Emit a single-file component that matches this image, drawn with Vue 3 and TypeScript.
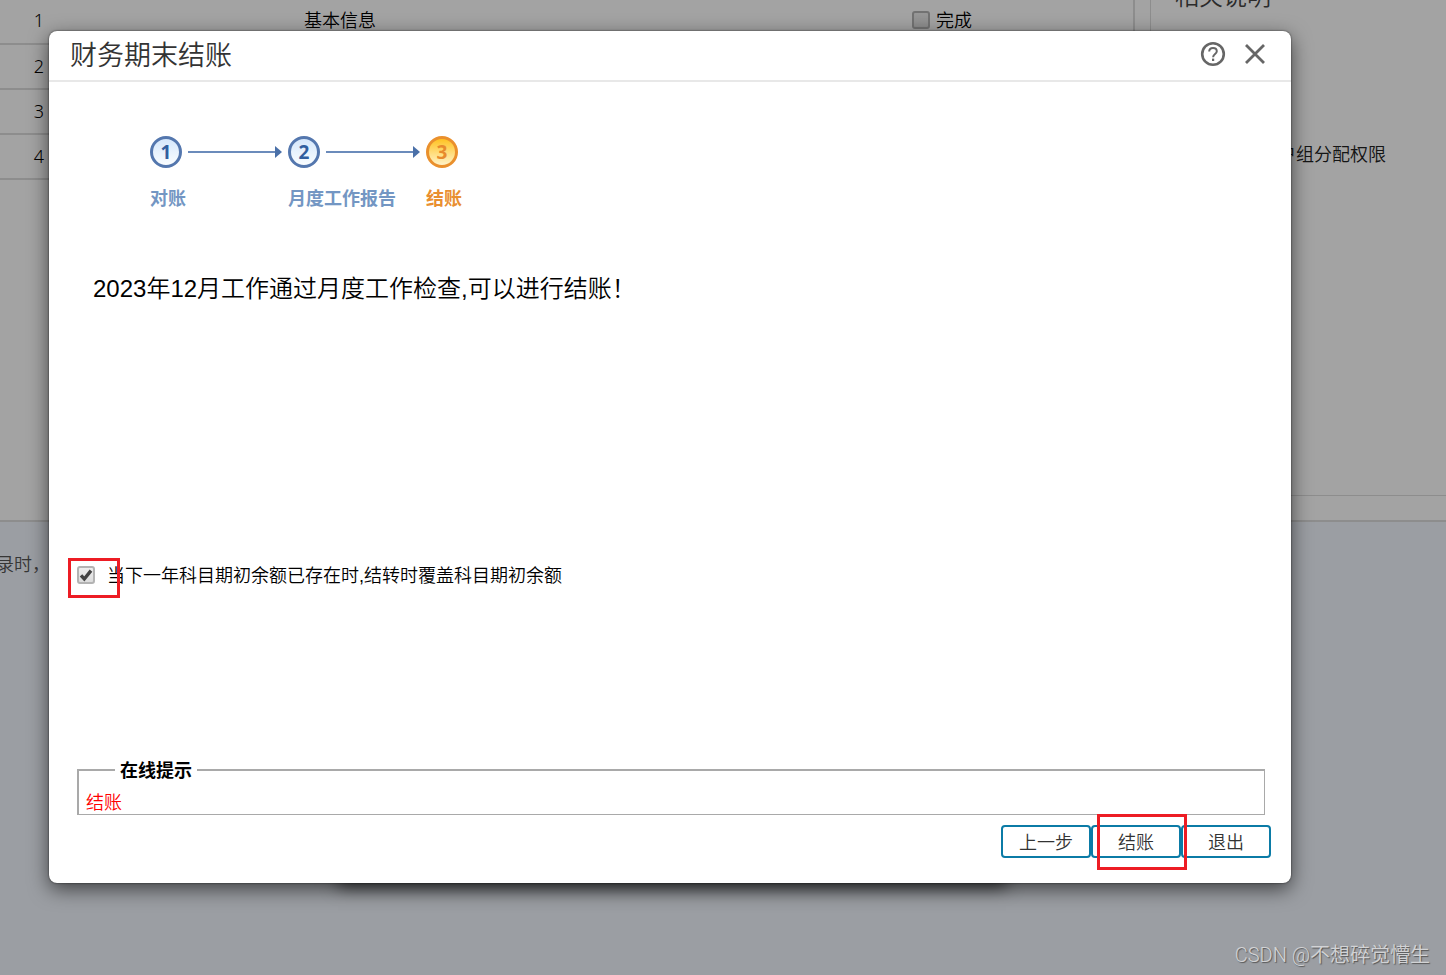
<script setup lang="ts">
import { ref } from 'vue'

interface Task {
  id: number
  name: string
  hasStatus: boolean
}

interface Step {
  id: number
  label: string
}

const tasks: Task[] = [
  { id: 1, name: '基本信息', hasStatus: true },
  { id: 2, name: '', hasStatus: false },
  { id: 3, name: '', hasStatus: false },
  { id: 4, name: '', hasStatus: false },
]

const steps: Step[] = [
  { id: 1, label: '对账' },
  { id: 2, label: '月度工作报告' },
  { id: 3, label: '结账' },
]

const currentStep = ref<number>(3)
const overwrite = ref<boolean>(true)
const done = ref<boolean>(false)
</script>

<template>
  <div class="page">
    <div class="workspace">
      <div class="task-pane">
        <table class="tasks">
          <tbody>
            <tr v-for="task in tasks" :key="task.id">
              <td class="col-index">{{ task.id }}</td>
              <td class="col-name">{{ task.name }}</td>
              <td class="col-status">
                <label v-if="task.hasStatus" class="status">
                  <input v-model="done" type="checkbox" class="box" />
                  <span>完成</span>
                </label>
              </td>
            </tr>
          </tbody>
        </table>
      </div>
      <aside class="notes">
        <h2 class="notes-title">相关说明</h2>
        <p class="notes-text">户组分配权限</p>
      </aside>
    </div>
    <p class="foot-text">录时，</p>

    <div class="overlay">
      <div class="under-dialog"></div>
      <section class="dialog" role="dialog" aria-labelledby="dialog-title">
        <header class="dialog-head">
          <h1 id="dialog-title">财务期末结账</h1>
          <button type="button" class="icon-button" aria-label="帮助">
            <svg width="26" height="26" viewBox="0 0 26 26" fill="none">
              <circle cx="13" cy="13" r="10.8" stroke="#666" stroke-width="2.6" />
              <path d="M9.2 10.6c0-2.2 1.6-3.7 3.8-3.7s3.8 1.4 3.8 3.4c0 2.6-3.7 2.9-3.7 5.9" stroke="#666" stroke-width="2" />
              <rect x="12" y="17.6" width="2.2" height="2.4" fill="#666" />
            </svg>
          </button>
          <button type="button" class="icon-button" aria-label="关闭">
            <svg width="26" height="26" viewBox="0 0 26 26" fill="none">
              <path d="M4 4L22 22M22 4L4 22" stroke="#666" stroke-width="2.8" />
            </svg>
          </button>
        </header>

        <div class="dialog-body">
          <ol class="steps">
            <li
              v-for="(step, i) in steps"
              :key="step.id"
              class="step"
              :class="{ active: step.id === currentStep }"
            >
              <div class="step-track">
                <span class="step-dot">{{ step.id }}</span>
                <svg v-if="i < steps.length - 1" class="step-arrow" width="94" height="14" viewBox="0 0 94 14">
                  <rect x="0" y="6" width="89" height="2" fill="#6b8bbb" />
                  <path d="M87 1L94 7L87 13Z" fill="#4a70a8" />
                </svg>
              </div>
              <span class="step-label">{{ step.label }}</span>
            </li>
          </ol>

          <p class="message">2023年12月工作通过月度工作检查,可以进行结账！</p>

          <label class="option">
            <span class="check-wrap">
              <input v-model="overwrite" type="checkbox" class="box" />
              <svg v-if="overwrite" class="tick" width="18" height="18" viewBox="0 0 18 18" fill="none">
                <path d="M4 9.4L7.3 13L14 4.6" stroke="#444" stroke-width="3.4" />
              </svg>
              <span class="mark mark-check"></span>
            </span>
            <span class="option-text">当下一年科目期初余额已存在时,结转时覆盖科目期初余额</span>
          </label>

          <fieldset class="tips">
            <legend>在线提示</legend>
            <p>结账</p>
          </fieldset>

          <footer class="actions">
            <button type="button" class="action">上一步</button>
            <button type="button" class="action">结账<span class="mark mark-action"></span></button>
            <button type="button" class="action">退出</button>
          </footer>
        </div>
      </section>
    </div>

    <div class="watermark">CSDN @不想碎觉懵生</div>
  </div>
</template>

<style>
body {
  margin: 0;
}
</style>

<style scoped>
* {
  box-sizing: border-box;
}

.page {
  position: relative;
  display: flex;
  flex-direction: column;
  min-height: 100vh;
  overflow: hidden;
  background: #f2f7ff;
  color: #000;
  font-family: "Noto Sans", "Noto Sans CJK SC", sans-serif;
  font-size: 18px;
  font-weight: 350;
  line-height: 24px;
}

h1,
h2,
p,
ol {
  margin: 0;
  padding: 0;
  font-weight: inherit;
}

.workspace {
  display: flex;
  gap: 15px;
  height: 522px;
  background: #fff;
  border-bottom: 2px solid #ddd;
}

.task-pane {
  flex: 1;
  border-right: 2px solid #ddd;
}

.tasks {
  width: 100%;
  margin-top: -1px;
  border-collapse: collapse;
  table-layout: fixed;
}

.tasks td {
  height: 45px;
  padding: 0 0 2px;
  border-bottom: 2px solid #ddd;
}

.col-index {
  width: 44px;
  text-align: right;
}

.tasks .col-name {
  padding-left: 260px;
}

.tasks .col-status {
  width: 221px;
}

.status {
  display: flex;
  align-items: center;
  gap: 6px;
}

.notes {
  flex: 0 0 296px;
  height: 496px;
  padding-left: 24px;
  overflow: hidden;
  border-left: 1px solid #ddd;
  border-bottom: 1px solid #ddd;
}

.notes-title {
  margin-top: -16px;
  color: #444;
  font-size: 24px;
  line-height: 24px;
}

.notes-text {
  margin-top: 134px;
  padding-left: 103px;
  color: #222;
}

.foot-text {
  margin-top: 30px;
  text-indent: -4px;
  color: #555;
}

.box {
  appearance: none;
  display: block;
  width: 18px;
  height: 18px;
  margin: 0;
  border: 2px solid #b3b3b3;
  border-radius: 3px;
  background: linear-gradient(#eee, #dcdcdc);
}

.overlay {
  position: absolute;
  inset: 0;
  display: flex;
  padding: 31px 155px 92px 49px;
  background: rgba(0, 0, 0, 0.36);
}

.under-dialog {
  position: absolute;
  left: 338px;
  right: 440px;
  bottom: 92px;
  height: 200px;
  box-shadow: 0 4px 16px rgba(0, 0, 0, 0.6);
}

.dialog {
  position: relative;
  display: flex;
  flex: 1;
  flex-direction: column;
  border-radius: 8px;
  background: #fff;
  box-shadow: 0 0 2px rgba(0, 0, 0, 0.7), 0 6px 20px rgba(0, 0, 0, 0.6);
}

.dialog-head {
  display: flex;
  align-items: center;
  gap: 16px;
  height: 51px;
  padding: 0 23px 4px 21px;
  border-bottom: 2px solid #e8e8e8;
}

.dialog-head h1 {
  flex: 1;
  padding-top: 2px;
  color: #333;
  font-size: 27px;
  line-height: 36px;
}

.icon-button {
  display: block;
  width: 26px;
  height: 26px;
  padding: 0;
  border: 0;
  background: none;
}

.icon-button svg {
  display: block;
}

.dialog-body {
  display: flex;
  flex: 1;
  flex-direction: column;
  padding: 54px 20px 25px 28px;
}

.steps {
  display: flex;
  margin-left: 73px;
  list-style: none;
}

.step {
  width: 138px;
  color: #7396c3;
}

.step-track {
  display: flex;
  align-items: center;
  gap: 6px;
}

.step-dot {
  width: 32px;
  height: 32px;
  border: 3px solid #5477ae;
  border-radius: 50%;
  background: linear-gradient(#d5e7fb, #fafdff);
  color: #315f9f;
  font-family: "Open Sans", "Noto Sans", sans-serif;
  font-size: 19px;
  font-weight: 700;
  line-height: 26px;
  text-align: center;
}

.step-label {
  display: block;
  margin-top: 18px;
  font-weight: 700;
  white-space: nowrap;
}

.step.active {
  color: #e98f30;
}

.active .step-dot {
  border-color: #ea902d;
  background: linear-gradient(#ffc222, #fff3c8);
  color: #e88a2c;
}

.message {
  margin: 63px 0 0 16px;
  font-family: "Liberation Sans", "Noto Sans CJK SC", sans-serif;
  font-size: 24px;
  line-height: 32px;
}

.option {
  display: flex;
  align-items: center;
  align-self: flex-start;
  gap: 12px;
  margin-top: 257px;
  font-family: "Liberation Sans", "Noto Sans CJK SC", sans-serif;
}

.option-text {
  padding-top: 2px;
}

.check-wrap {
  position: relative;
}

.tick {
  position: absolute;
  top: 0;
  left: 0;
  pointer-events: none;
}

.mark {
  position: absolute;
  border: 3px solid #ed1c24;
  pointer-events: none;
}

.mark-check {
  top: -8px;
  left: -9px;
  width: 52px;
  height: 40px;
}

.tips {
  min-width: 0;
  margin: auto 6px 0 0;
  padding: 10px 7px 0;
  border: 1px solid #a9a9a9;
  border-width: 2px 1px 1px 2px;
}

.tips legend {
  margin-left: 29px;
  padding: 0 5px;
  font-weight: 700;
  line-height: 20px;
}

.tips p {
  color: #f00;
}

.actions {
  display: flex;
  justify-content: flex-end;
  margin-top: 10px;
}

.action {
  position: relative;
  width: 90px;
  height: 33px;
  padding: 0;
  border: 2px solid #0b7ba6;
  border-radius: 4px;
  background: #fff;
  color: #333;
  font: inherit;
}

.mark-action {
  top: -13px;
  left: 4px;
  z-index: 1;
  width: 90px;
  height: 56px;
}

.watermark {
  position: absolute;
  right: 16px;
  bottom: 6px;
  color: #d2d3d5;
  font-family: Roboto, "Noto Sans CJK SC", sans-serif;
  font-size: 20px;
  line-height: 28px;
  text-shadow: 1px 1px 1px #555;
}
</style>
